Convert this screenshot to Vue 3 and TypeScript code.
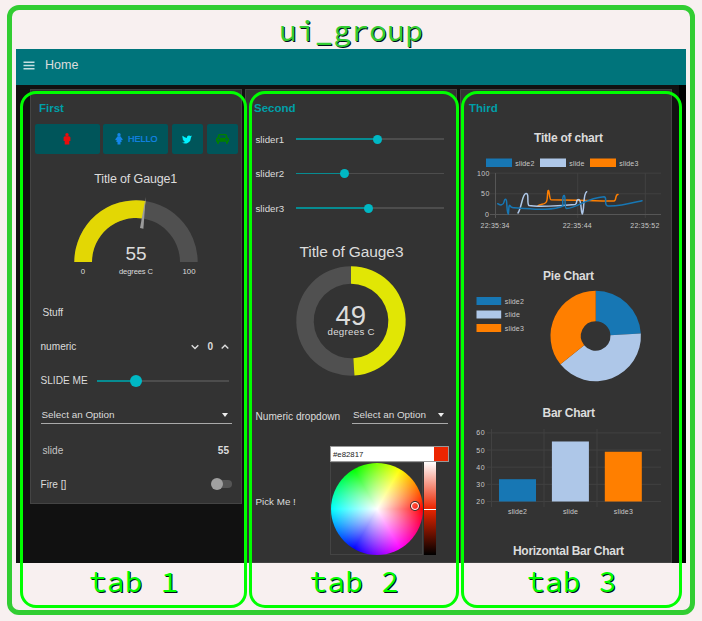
<script setup lang="ts">
interface Slider { name: string; percent: number }
interface Series { name: string; value: number; color: string }

const sliders: Slider[] = [
  { name: 'slider1', percent: 55 },
  { name: 'slider2', percent: 33 },
  { name: 'slider3', percent: 49 },
]

const series: Series[] = [
  { name: 'slide2', value: 33, color: '#1777b4' },
  { name: 'slide', value: 55, color: '#aec7e8' },
  { name: 'slide3', value: 49, color: '#ff7f00' },
]

/** Ring segment between two clockwise angles (degrees, 0 = twelve o'clock). */
function ring(cx: number, cy: number, outer: number, inner: number, from: number, to: number): string {
  const at = (r: number, deg: number): string => {
    const a = ((deg - 90) * Math.PI) / 180
    return `${(cx + r * Math.cos(a)).toFixed(2)} ${(cy + r * Math.sin(a)).toFixed(2)}`
  }
  const large = to - from > 180 ? 1 : 0
  return `M${at(outer, from)}A${outer} ${outer} 0 ${large} 1 ${at(outer, to)}L${at(inner, to)}A${inner} ${inner} 0 ${large} 0 ${at(inner, from)}Z`
}

const total = series.reduce((sum, s) => sum + s.value, 0)
let angle = 0
const slices = series.map((s) => {
  const start = angle
  angle += (s.value / total) * 360
  return { color: s.color, d: ring(595.7, 336, 45.2, 14.8, start, angle) }
})

const barY = (value: number): number => 501.5 - (value - 20) * 1.715
const bars = series.map((s, i) => ({ ...s, x: 499 + i * 52.9, y: barY(s.value), height: 501.5 - barY(s.value) }))
const barTicks = [60, 50, 40, 30, 20]
const legendX = [486, 540, 590]
const labelWidths = [19, 15, 19]
const timeTicks = [
  { x: 495.5, label: '22:35:34' },
  { x: 577.7, label: '22:35:44' },
  { x: 645.3, label: '22:35:52' },
]
</script>

<template>
  <main class="page">
    <section class="frame">
      <h1 class="note group-name">ui_group</h1>
      <div class="dashboard">
        <header class="toolbar">
          <svg width="12" height="9" viewBox="0 0 12 9"><path d="M.5 1.200h11M.5 4.500h11M.5 7.800h11" stroke="#c4dfe1" stroke-width="1.400" /></svg>
          <span>Home</span>
        </header>
        <div class="columns">
          <article class="card first">
            <h2>First</h2>
            <div class="buttons">
              <button class="red">
                <svg width="8" height="12" viewBox="0 0 8 12"><circle cx="4" cy="1.700" r="1.700" /><path d="M1.800 3.300h4.400L7.400 4.200v3.700h-1.100v3.700H1.700V7.900H.6V4.200z" /></svg>
              </button>
              <button class="blue">
                <svg width="8" height="12" viewBox="0 0 8 12"><circle cx="4" cy="1.700" r="1.700" /><path d="M2.600 3.300h2.800l2.400 3.100-.9 1-1-.7.9 2.300H5.500v2.600h-3V9H1.200l.9-2.300-1 .7-.9-1z" /></svg>
                <span>HELLO</span>
              </button>
              <button class="cyan">
                <svg width="10" height="9" viewBox="0 0 24 20"><path d="M24 2.400a10 10 0 0 1-2.800.8A5 5 0 0 0 23.300.5a10 10 0 0 1-3.100 1.200 5 5 0 0 0-8.400 4.500A14 14 0 0 1 1.700 1a5 5 0 0 0 1.500 6.600A5 5 0 0 1 1 7a5 5 0 0 0 3.900 4.800 5 5 0 0 1-2.200.1 5 5 0 0 0 4.600 3.400A10 10 0 0 1 0 17.400 14 14 0 0 0 21.500 4.900 10 10 0 0 0 24 2.400z" /></svg>
              </button>
              <button class="green">
                <svg width="13" height="10" viewBox="0 0 26 22" preserveAspectRatio="none"><path fill-rule="evenodd" d="M7 0h12q2 0 2.600 2l1.800 6Q26 8.500 26 11v6h-2v3q0 2-2 2t-2-2v-3H6v3q0 2-2 2t-2-2v-3H0v-6q0-2.500 2.600-3l1.800-6Q5 0 7 0zM7.500 3 6 8h14l-1.500-5zM5 10.500a2 2 0 1 0 0 4 2 2 0 0 0 0-4zm16 0a2 2 0 1 0 0 4 2 2 0 0 0 0-4z" /></svg>
              </button>
            </div>
            <svg class="gauge" width="210" height="141" viewBox="31 154 210 141">
              <text class="title" x="94.300" y="183" font-size="12.500" textLength="83">Title of Gauge1</text>
              <path :d="ring(136, 262, 61.700, 44, -90, 90)" fill="#505050" />
              <path :d="ring(136, 262, 61.700, 44, -90, 9)" fill="#e3d704" />
              <path d="M145.700 197 143.400 228.700 140 228Z" fill="#9b9b9b" />
              <text x="136" y="260.300" font-size="19" text-anchor="middle" textLength="21">55</text>
              <text x="136" y="273.500" font-size="7.600" text-anchor="middle" textLength="34">degrees C</text>
              <text x="83" y="273.500" font-size="7.800" text-anchor="middle">0</text>
              <text x="189" y="273.500" font-size="7.800" text-anchor="middle">100</text>
            </svg>
            <div class="row indent">Stuff</div>
            <div class="row">
              <span>numeric</span>
              <div class="stepper">
                <svg width="8" height="6" viewBox="0 0 8 6"><path d="M.7 1.200 4 4.500 7.300 1.200" /></svg>
                <b>0</b>
                <svg width="8" height="6" viewBox="0 0 8 6"><path d="M.7 4.500 4 1.200 7.300 4.500" /></svg>
              </div>
            </div>
            <div class="row slide-me">
              <span>SLIDE ME</span>
              <div class="track big"><div class="fill" style="width: 29.500%"></div></div>
            </div>
            <div class="row option"><div class="select"><span>Select an Option</span><i class="caret"></i></div></div>
            <div class="row indent"><span class="dim">slide</span><b>55</b></div>
            <div class="row fire"><span>Fire []</span><i class="switch"></i></div>
          </article>

          <article class="card second">
            <h2>Second</h2>
            <div v-for="s in sliders" :key="s.name" class="row slider-row">
              <span>{{ s.name }}</span>
              <div class="track"><div class="fill" :style="{ width: s.percent + '%' }"></div></div>
            </div>
            <svg class="gauge" width="210" height="173" viewBox="246 225 210 173">
              <text class="title" x="299.500" y="257.300" font-size="15.500" textLength="104">Title of Gauge3</text>
              <path :d="ring(351, 321, 54.700, 37.300, 176.400, 360)" fill="#505050" />
              <path :d="ring(351, 321, 54.700, 37.300, 0, 176.400)" fill="#e1e605" />
              <text x="350.700" y="325.300" font-size="27.500" text-anchor="middle">49</text>
              <text x="351" y="335.300" font-size="9.700" text-anchor="middle" textLength="47">degrees C</text>
            </svg>
            <div class="row dropdown">
              <span>Numeric dropdown</span>
              <div class="select"><span>Select an Option</span><i class="caret"></i></div>
            </div>
            <div class="pick">
              <span>Pick Me !</span>
              <div class="picker">
                <div class="hex"><span>#e82817</span><i></i></div>
                <div class="palette">
                  <div class="wheel-box"><div class="wheel"><i class="marker"></i></div></div>
                  <div class="light"></div>
                </div>
              </div>
            </div>
          </article>

          <article class="card third">
            <h2>Third</h2>
            <svg class="charts" width="210" height="441" viewBox="461 122 210 441">
              <text class="heading" x="534" y="141.500" textLength="69">Title of chart</text>
              <g v-for="(s, i) in series" :key="s.name">
                <rect :x="legendX[i]" y="158.500" width="26" height="8.500" :fill="s.color" />
                <text class="small" :x="legendX[i] + 29.300" y="165.800" :textLength="labelWidths[i]">{{ s.name }}</text>
              </g>
              <g class="grid">
                <path d="M490 173.200H661M490 193.800H661M577.700 173V218M645.300 173V218" />
                <path class="axis" d="M495.500 173V218M490 214.500H661" />
              </g>
              <text class="small" x="489.500" y="175.800" text-anchor="end" textLength="12.500">100</text>
              <text class="small" x="489.500" y="196.300" text-anchor="end" textLength="8.500">50</text>
              <text class="small" x="489" y="217" text-anchor="end">0</text>
              <text v-for="t in timeTicks" :key="t.label" class="small" :x="t.x - .5" y="227.500" text-anchor="middle" textLength="29">{{ t.label }}</text>
              <g class="lines">
                <path stroke="#ff7f00" d="M538 205.800C541 203 546 206 547 200C547.700 196 547.500 190 548.500 190.500C549.500 192 549.500 199.500 551 199.700C570 199.700 590 201.300 614 201C616.500 201 615 194 618 194.500" />
                <path stroke="#aec7e8" d="M518 213C522 207 522 194 526 193.500C529.500 193 526.500 204 529 205.500C536 207 560 206 575 204.500C578 204 575 200 578.500 199.500C581.500 199 581 214 582.300 214C584.500 210 583 193 586.700 191.700" />
                <path stroke="#1777b4" d="M497.700 203.700C500 205.500 503.500 205.500 504 202C504.700 198.500 506.500 197.500 506.700 203C507.200 210 507.300 214 508.300 214C509 211 508.500 204.500 510 205.500C511 208 512 207.800 514 207.800C530 208.500 552 211.500 563 206C562.500 202 562.500 195 564.300 195.500C566 198 564 208.500 566.500 208.500C578 208 586 198 604 196.700C608 197 603 205.500 608 206C620 206.500 632 203 642 200.700" />
              </g>

              <text class="heading" x="543" y="279.500" textLength="51">Pie Chart</text>
              <g v-for="(s, i) in series" :key="s.name + 'pie'">
                <rect x="476.500" :y="297 + i * 13.500" width="24.700" height="8" :fill="s.color" />
                <text class="small" x="504.800" :y="303.800 + i * 13.500" :textLength="labelWidths[i]">{{ s.name }}</text>
              </g>
              <path v-for="s in slices" :key="s.color" :d="s.d" :fill="s.color" />

              <text class="heading" x="542.500" y="417" textLength="52.500">Bar Chart</text>
              <g class="grid">
                <path v-for="t in barTicks" :key="t" :d="`M487 ${barY(t)}H661`" />
                <path d="M491.500 429V507M544 429V507M597 429V507" />
              </g>
              <text v-for="t in barTicks" :key="t + 'label'" class="small" x="484.700" :y="barY(t) + 2.500" text-anchor="end" textLength="8.500">{{ t }}</text>
              <g v-for="(b, i) in bars" :key="b.name + 'bar'">
                <rect :x="b.x" :y="b.y" width="37" :height="b.height" :fill="b.color" />
                <text class="small" :x="b.x + 18.500" y="514" text-anchor="middle" :textLength="labelWidths[i]">{{ b.name }}</text>
              </g>
              <text class="heading" x="513" y="555" textLength="111">Horizontal Bar Chart</text>
            </svg>
          </article>
        </div>
      </div>
    </section>
    <div class="tab tab-1"><span class="note">tab 1</span></div>
    <div class="tab tab-2"><span class="note">tab 2</span></div>
    <div class="tab tab-3"><span class="note">tab 3</span></div>
  </main>
</template>

<style>
body { background: #f8f0f0; overflow: hidden; }
</style>

<style scoped>
* { box-sizing: border-box; }
.page {
  position: relative;
  width: 702px;
  height: 621px;
  padding: 5px 7px 6px;
  background: #f8f0f0;
  color: #dcdcdc;
  font: 10.100px/1 "Liberation Sans", Arial, sans-serif;
}
.frame {
  width: 688px;
  height: 610px;
  border: 5px solid #32cd32;
  border-radius: 12px;
  padding: 0 4px;
}
.note {
  margin: 0;
  font: 400 30px/39px "Source Code Pro", "Noto Sans Mono CJK JP", "DejaVu Sans Mono", monospace;
  text-shadow: 1px 1px 0 #001018;
  white-space: pre;
}
.group-name { color: #32cd32; text-align: center; height: 39px; line-height: 41px; }
.dashboard { width: 670px; height: 514px; background: #111; overflow: hidden; }
.toolbar {
  height: 36px;
  padding: 0 7px 3px;
  background: #00747b;
  display: flex;
  align-items: center;
  gap: 10px;
  font-size: 12.500px;
}
.columns {
  display: grid; grid-template-columns: repeat(3, 212px); gap: 3px; padding: 4px 0 0 14px;
  align-items: start; height: 478px; border-right: 7px solid #000;
}
.card { height: 474px; background: #333; border: 1px solid #444; overflow: hidden; }
.first { height: 415px; }
h2 { margin: 0; height: 34px; padding: 0 8px; line-height: 37px; color: #009fa8; font-size: 11.500px; font-weight: 700; }
.second h2 { height: 32px; }
.third h2 { height: 32px; }
.buttons { display: grid; grid-template-columns: 65px 65px 31px 31px; gap: 3.700px; padding-left: 3.500px; height: 30px; }
button {
  display: flex; align-items: center; justify-content: center; gap: 5px;
  border: 0; border-radius: 2px; padding: 0; background: #00555a; font: 9px "Liberation Sans", sans-serif;
}
button svg { fill: currentColor; }
.red { color: #e80c0c; }
.blue { color: #1486ea; padding-left: 1px; -webkit-text-stroke: 0.200px #1486ea; }
.cyan { color: #00f2ff; }
.green { color: #008000; }
svg { display: block; flex: none; }
svg text { fill: #dcdcdc; }
.row { height: 34.400px; display: flex; align-items: center; justify-content: space-between; padding: 0 12px 0 9.500px; }
.first .row > span, .first .row > b, .indent, .stepper { padding-top: 1px; }
.first .indent { padding-left: 11.500px; }
.dim { color: #c4c4c4; }
.stepper { display: flex; align-items: center; gap: 8px; }
.stepper path { fill: none; stroke: #ddd; stroke-width: 1.400; }
.track { position: relative; height: 1.500px; width: 148.500px; background: #4d4d4d; }
.fill { position: relative; height: 100%; background: #078c92; }
.fill::after {
  content: ""; position: absolute; right: -4.500px; top: -3.700px; width: 9px; height: 9px;
  border-radius: 50%; background: #00b8c4;
}
.big { width: 132px; }
.big .fill::after { width: 12.500px; height: 12.500px; right: -6.200px; top: -5.500px; }
.option { padding: 0 9.500px; }
.select {
  flex: 1; height: 18px; display: flex; align-items: center; justify-content: space-between;
  border-bottom: 1px solid #aaa; padding: 0 4px 0 1px; font-size: 9.900px;
}
.caret { border: 3.700px solid transparent; border-top: 4px solid #eee; border-bottom: 0; }
.fire { padding-right: 9.500px; }
.switch { position: relative; width: 19px; height: 8px; border-radius: 4px; background: #555; }
.switch::after { content: ""; position: absolute; left: -2px; top: -2px; width: 12px; height: 12px; border-radius: 50%; background: #a0a0a0; }
.slider-row { padding: 0 12px 0 9.500px; }
.slider-row span { font-size: 9.700px; padding-top: 1px; }
.dropdown { height: 34px; padding: 0 8px 0 9.500px; }
.dropdown > span { padding-top: 3px; }
.dropdown .select { flex: none; width: 96px; }
.pick { height: 131px; padding: 14px 7px 0 9.500px; display: flex; justify-content: space-between; }
.pick > span { padding-top: 51px; font-size: 9.800px; }
.picker { width: 119px; }
.hex { height: 16px; display: flex; background: #fff; border: 1px solid #999; color: #222; font-size: 7.800px; line-height: 15px; }
.hex span { flex: 1; padding-left: 2px; }
.hex i { width: 14px; background: #ec2500; }
.palette { display: flex; gap: 1px; }
.wheel-box { width: 93px; height: 93px; border: 1px solid #444; }
.wheel {
  position: relative; width: 92px; height: 92px; border-radius: 50%;
  background: radial-gradient(circle closest-side, #fff, rgba(255, 255, 255, 0) 100%), conic-gradient(from 90deg, red, magenta, blue, cyan, lime, yellow, red);
}
.marker { position: absolute; left: 80px; top: 39px; width: 8px; height: 8px; border: 1.500px solid #fff; border-radius: 50%; box-shadow: 0 0 0 1px #333; }
.light { position: relative; width: 12px; height: 93px; background: linear-gradient(#fff, #ec2500 50%, #000); }
.light::after { content: ""; position: absolute; left: 0; top: 47px; width: 12px; height: 1px; background: #fff; }
.heading { font-size: 12px; font-weight: 700; }
.small { font-size: 7px; fill: #c8c8c8; }
.grid path { fill: none; stroke: #414141; stroke-width: 1; }
.grid .axis { stroke: #565656; }
.lines path { fill: none; stroke-width: 1.500; stroke-linejoin: round; stroke-linecap: round; }
.tab {
  position: absolute; top: 90.700px; height: 517.300px; border: 3.400px solid #0f0; border-radius: 16px;
  display: flex; align-items: flex-end; justify-content: center; color: #0f0; padding-bottom: 3.500px;
}
.tab-1 { left: 20px; width: 227px; }
.tab-2 { left: 249px; width: 210px; }
.tab-3 { left: 461px; width: 221px; }
</style>
